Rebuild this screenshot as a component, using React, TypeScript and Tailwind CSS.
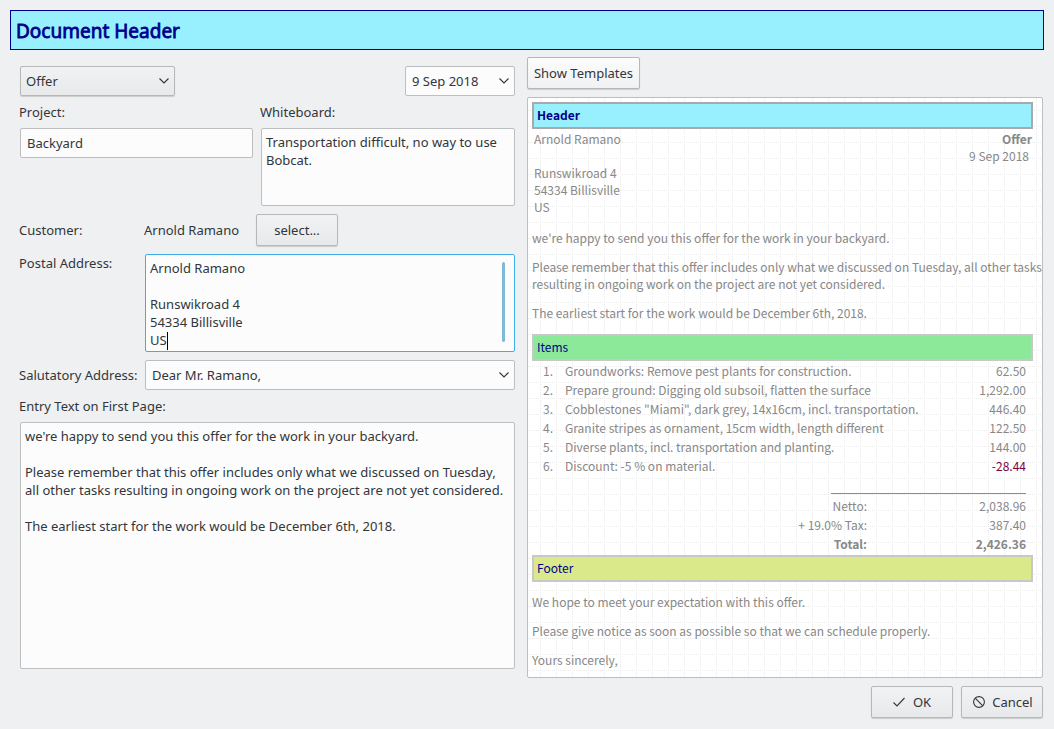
import type { ReactNode } from "react";

const items: [string, string][] = [
  ["Groundworks: Remove pest plants for construction.", "62.50"],
  ["Prepare ground: Digging old subsoil, flatten the surface", "1,292.00"],
  ['Cobblestones "Miami", dark grey, 14x16cm, incl. transportation.', "446.40"],
  ["Granite stripes as ornament, 15cm width, length different", "122.50"],
  ["Diverse plants, incl. transportation and planting.", "144.00"],
  ["Discount: -5 % on material.", "-28.44"],
];

const entryText = `we're happy to send you this offer for the work in your backyard.

Please remember that this offer includes only what we discussed on Tuesday, all other tasks resulting in ongoing work on the project are not yet considered.

The earliest start for the work would be December 6th, 2018.`;

const postalAddress = `Arnold Ramano

Runswikroad 4
54334 Billisville
US`;

const box = "block w-full rounded-[2px] border bg-[#fcfcfc]";
const field = box + " border-[#bcbebf]";
const area = " resize-none overflow-hidden px-1 py-1 leading-[18px] outline-none";
const raisedBox = "rounded-[2px] border border-[#b5b7b9] bg-linear-to-b shadow-[0_1px_1px_rgba(0,0,0,0.15)]";
const greyFill = " from-[#f1f2f3] to-[#e8e9ea]";
const button = "flex h-8 items-center justify-center " + raisedBox;

function Dropdown({ id, label, options, raised }: { id: string; label?: string; options: string[]; raised?: boolean }) {
  return (
    <div className="relative">
      <select
        id={id}
        aria-label={label}
        className={
          raised
            ? "block h-[30px] w-full appearance-none pl-[5px] pr-6 " + raisedBox + greyFill
            : field + " h-[30px] appearance-none pl-[6px] pr-6"
        }
      >
        {options.map((o) => (
          <option key={o}>{o}</option>
        ))}
      </select>
      <svg className="pointer-events-none absolute right-[6px] top-[11px]" width="10" height="8" viewBox="0 0 10 8" fill="none" stroke="#31363b" strokeWidth="1.1">
        <path d="M.5 1.5 5 6 9.5 1.5" />
      </svg>
    </div>
  );
}

function Section({ className, children }: { className: string; children: ReactNode }) {
  return <h2 className={"flex h-[27px] items-center border-2 pb-[2px] pl-[3px] text-[#00008b] " + className}>{children}</h2>;
}

function Grid() {
  return (
    <svg className="absolute inset-0 h-full w-full" aria-hidden="true">
      <defs>
        <pattern id="dots" x="-4" y="-4" width="16" height="16" patternUnits="userSpaceOnUse">
          <path d="M.5 0V16M0 .5H16" stroke="#ebebeb" strokeDasharray="1 1" fill="none" />
        </pattern>
      </defs>
      <rect width="100%" height="100%" fill="url(#dots)" />
    </svg>
  );
}

function Preview() {
  return (
    <section className="relative flex-1 overflow-hidden rounded-[2px] border border-[#bcbebf] bg-white font-['Noto_Sans_CJK_SC',sans-serif] text-[12px] leading-[17px] text-[#888888]">
      <Grid />
      <div className="relative pt-1 pr-[9px] pl-1">
        <Section className="border-[#a9a9a9] bg-[#98f0ff] font-bold">Header</Section>
        <div className="flex justify-between pt-[1px] pr-[1px] pl-[2px]">
          <address className="not-italic">
            Arnold Ramano
            <br />
            <br />
            Runswikroad 4
            <br />
            54334 Billisville
            <br />
            US
          </address>
          <div className="text-right">
            <p className="font-bold">Offer</p>
            <p className="pr-[3px]">9 Sep 2018</p>
          </div>
        </div>
        <div className="space-y-3 pt-[14px] pb-[13px] whitespace-nowrap">
          <p>we're happy to send you this offer for the work in your backyard.</p>
          <p>
            Please remember that this offer includes only what we discussed on Tuesday, all other tasks
            <br />
            resulting in ongoing work on the project are not yet considered.
          </p>
          <p>The earliest start for the work would be December 6th, 2018.</p>
        </div>
        <Section className="border-[#c8c8c8] bg-[#8ce99a]">Items</Section>
        <table className="w-full">
          <tbody>
            {items.map(([text, price], i) => (
              <tr key={text} className="h-[19px]">
                <td className="w-[33px] pl-[11px]">{i + 1}.</td>
                <td>{text}</td>
                <td className={price.startsWith("-") ? "pr-[7px] text-right text-[#800040]" : "pr-[7px] text-right"}>{price}</td>
              </tr>
            ))}
          </tbody>
        </table>
        <div className="mt-[18px] mr-[7px] ml-auto w-[195px] border-t border-[#8c8c8c]" />
        <table className="mt-[2px] w-full text-right">
          <tbody>
            <tr className="h-[19px]">
              <td>Netto:</td>
              <td className="w-[166px] pr-[7px]">2,038.96</td>
            </tr>
            <tr className="h-[19px]">
              <td>+ 19.0% Tax:</td>
              <td className="pr-[7px]">387.40</td>
            </tr>
            <tr className="h-[19px] font-bold">
              <td>Total:</td>
              <td className="pr-[7px]">2,426.36</td>
            </tr>
          </tbody>
        </table>
        <Section className="mt-[2px] border-[#c8c8c8] bg-[#dae98a]">Footer</Section>
        <div className="space-y-3 pt-[11px] pb-1">
          <p>We hope to meet your expectation with this offer.</p>
          <p>Please give notice as soon as possible so that we can schedule properly.</p>
          <p>Yours sincerely,</p>
        </div>
      </div>
    </section>
  );
}

export default function App() {
  return (
    <div className="flex min-h-screen flex-col bg-[#eff0f1] p-[10px] pb-[11px] font-['Noto_Sans',sans-serif] text-[13px] leading-[18px] text-[#31363b]">
      <h1 className="flex h-10 items-center border border-[#00008b] bg-[#98f0ff] pt-[2px] pl-[5px] text-[19px] text-[#00008b] [-webkit-text-stroke:0.8px_#00008b]">
        Document Header
      </h1>
      <main className="mt-[7px] grid flex-1 grid-cols-[495fr_516fr] gap-3 pr-[1px] pl-[10px]">
        <form className="flex min-w-0 flex-col pt-[9px] pb-[9px]">
          <div className="flex justify-between">
            <div className="w-[155px]">
              <Dropdown id="type" label="Document type" options={["Offer"]} raised />
            </div>
            <div className="w-[110px]">
              <Dropdown id="date" label="Date" options={["9 Sep 2018"]} />
            </div>
          </div>
          <div className="grid grid-cols-[233fr_254fr] gap-2">
            <div>
              <label htmlFor="project" className="-ml-px flex h-8 items-center">Project:</label>
              <input id="project" className={field + " h-[30px] px-[6px]"} defaultValue="Backyard" />
            </div>
            <div>
              <label htmlFor="whiteboard" className="-ml-px flex h-8 items-center">Whiteboard:</label>
              <textarea id="whiteboard" className={field + area + " h-[78px]"} defaultValue="Transportation difficult, no way to use Bobcat." />
            </div>
          </div>
          <div className="mt-2 grid grid-cols-[125px_1fr] gap-y-2">
            <span className="-ml-px self-center">Customer:</span>
            <div className="-ml-px flex items-center gap-[17px]">
              <span>Arnold Ramano</span>
              <button type="button" className={button + greyFill + " w-[82px]"}>select...</button>
            </div>
            <label htmlFor="postal" className="-ml-px">Postal Address:</label>
            <div className="relative">
              <textarea id="postal" className={box + area + " h-[98px] border-[#3daee9]"} defaultValue={postalAddress} />
              <span className="absolute top-[78px] left-[22px] h-[18px] w-px bg-black" />
              <span className="absolute top-2 right-[10px] h-20 w-[3px] rounded-full bg-[#7fb9da]" />
            </div>
            <label htmlFor="salutation" className="-ml-px self-center">Salutatory Address:</label>
            <Dropdown id="salutation" options={["Dear Mr. Ramano,"]} />
          </div>
          <label htmlFor="entry" className="-ml-px flex h-8 items-center">Entry Text on First Page:</label>
          <textarea id="entry" className={field + area + " min-h-[120px] flex-1"} defaultValue={entryText} />
        </form>
        <div className="flex min-w-0 flex-col items-stretch gap-2">
          <button type="button" className={button + " w-[113px] self-start from-[#fcfcfc] to-[#f1f1f1]"}>Show Templates</button>
          <Preview />
        </div>
      </main>
      <footer className="mt-2 flex justify-end gap-2 pr-[1px]">
        <button type="button" className={button + greyFill + " w-[82px] gap-2"}>
          <svg width="12" height="10" viewBox="0 0 12 10" fill="none" stroke="#31363b" strokeWidth="1.1">
            <path d="M.5 5.5 4 9 11.5 1" />
          </svg>
          OK
        </button>
        <button type="button" className={button + greyFill + " w-[82px] gap-[7px] pl-[2px]"}>
          <svg width="12" height="12" viewBox="0 0 12 12" fill="none" stroke="#31363b" strokeWidth="1.1">
            <circle cx="6" cy="6" r="5.4" />
            <path d="M2.2 2.2 9.8 9.8" />
          </svg>
          Cancel
        </button>
      </footer>
    </div>
  );
}
